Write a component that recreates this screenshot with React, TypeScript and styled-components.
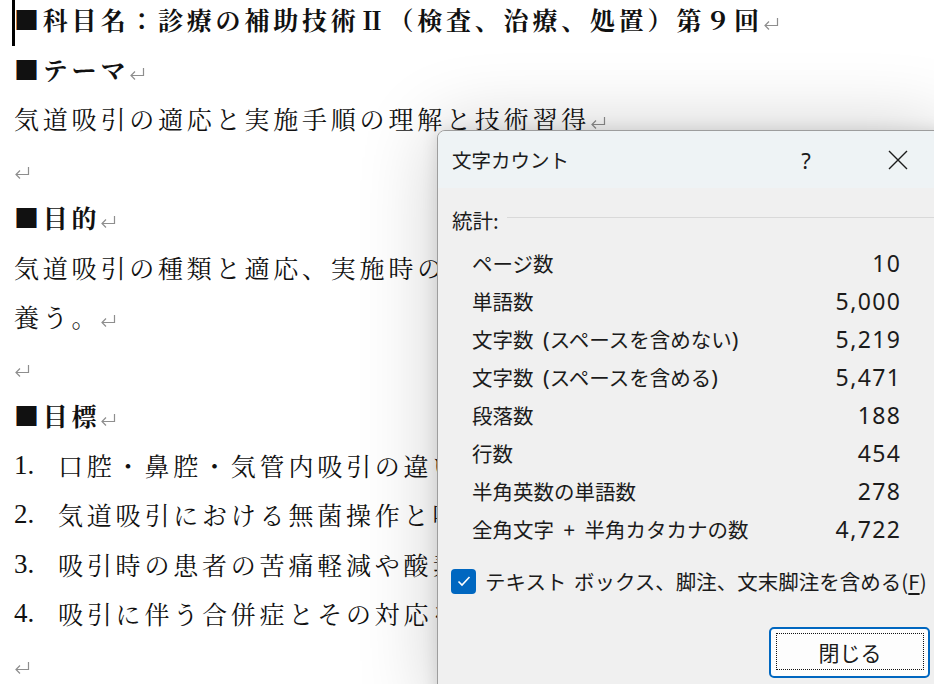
import React from "react";
import styled, { createGlobalStyle } from "styled-components";

const Global = createGlobalStyle`
    * { box-sizing: border-box; }
    html, body {
        margin: 0;
        background: #ffffff;
        overflow: hidden;
    }
`

const Page = styled.div`
    position: relative;
    width: 934px;
    height: 684px;
    overflow: hidden;
    background: #ffffff;
`

const Doc = styled.div`
    margin-top: -5px;
    padding-left: 14px;
    font-family: "Noto Serif CJK JP", "Noto Sans CJK JP", serif;
    color: #111;
`

const Line = styled.div<{ $bold?: boolean }>`
    position: relative;
    height: 49.5px;
    line-height: 49.5px;
    font-size: 25px;
    letter-spacing: 3.8px;
    white-space: nowrap;
    font-weight: ${({ $bold }) => ($bold ? 700 : 400)};
`

const Caret = styled.span`
    position: absolute;
    left: -2px;
    top: 4.75px;
    width: 3px;
    height: 46px;
    background: #000;
`

// paragraph mark shown by Word's formatting view
const MarkSvg = styled.svg`
    display: inline-block;
    width: 16px;
    height: 14px;
    vertical-align: -1px;
`

const Mark = () => (
    <MarkSvg viewBox="0 0 16 14">
        <path d="M14.5 1 V8.5 H2 M6 4.5 L2 8.5 L6 12.5" stroke="#8e8e8e" strokeWidth="1.2" fill="none" />
    </MarkSvg>
)

const ListItem = styled(Line)`
    display: grid;
    grid-template-columns: 44px auto;
`

const Num = styled.span`
    font-family: "Liberation Serif", serif;
    font-size: 27px;
    letter-spacing: 0;
`

const Dialog = styled.div`
    position: absolute;
    left: 437px;
    top: 130px;
    width: 510px;
    height: 580px;
    border: 1px solid #9d9d9d;
    border-radius: 8px 8px 0 0;
    background: #f0f0f0;
    box-shadow: 0 0 80px rgba(0, 0, 0, 0.2), 0 0 16px rgba(0, 0, 0, 0.12);
    font-family: "Noto Sans CJK JP", "Noto Sans", sans-serif;
    color: #1b1b1b;
    overflow: hidden;
    display: flex;
    flex-direction: column;
`

const TitleBar = styled.div`
    height: 57px;
    flex: none;
    display: flex;
    align-items: center;
    padding: 0 25px 0 14px;
    background: #eef3f5;
`

const Title = styled.div`
    flex: 1;
    font-size: 19.5px;
`

const TitleButton = styled.div<{ $gap?: string }>`
    width: 46px;
    height: 40px;
    display: flex;
    align-items: center;
    justify-content: center;
    margin-left: ${({ $gap }) => $gap ?? '0'};
    font-family: "Noto Sans", sans-serif;
    font-size: 22px;
`

const Body = styled.div`
    padding-left: 14px;
`

const SectionHead = styled.div`
    margin-top: 17px;
    height: 30px;
    display: flex;
    align-items: center;
    font-size: 20.5px;
`

const Rule = styled.div`
    flex: 1;
    height: 1px;
    margin: 0 0 6px 8px;
    background: #d9d9d9;
`

const Stats = styled.div`
    margin-top: 9px;
    padding: 0 46px 0 20px;
    display: grid;
    grid-template-columns: 1fr auto;
    grid-auto-rows: 38px;
    align-items: center;
`

const Label = styled.div`
    font-size: 20.5px;
    word-spacing: 5px;
    white-space: nowrap;
`

const Paren = styled.span`
    font-family: "Noto Sans", sans-serif;
    font-size: 22px;
`

const Value = styled.div`
    font-family: "Noto Sans", sans-serif;
    font-size: 23px;
    letter-spacing: 1.4px;
    margin-right: -1.4px;
    text-align: right;
`

const CheckRow = styled.label`
    margin-top: 18px;
    height: 30px;
    display: flex;
    align-items: center;
    gap: 9px;
    font-size: 20.5px;
    word-spacing: 3px;
    white-space: nowrap;
`

const Box = styled.span`
    width: 25px;
    height: 25px;
    margin-left: -1px;
    border-radius: 4px;
    background: #0067c0;
    display: flex;
    align-items: center;
    justify-content: center;
`

const Key = styled.span`
    text-decoration: underline;
    text-underline-offset: 3px;
`

const ButtonRow = styled.div`
    margin-top: 31px;
    padding-right: 16px;
    display: flex;
    justify-content: flex-end;
`

const Button = styled.div`
    width: 161px;
    height: 51px;
    border: 2px solid #0067c0;
    border-radius: 5px;
    background: #fdfdfd;
    padding: 4px 4px 6px 5px;
`

const Focus = styled.div`
    height: 100%;
    border: 1px dotted #111;
    display: flex;
    align-items: center;
    justify-content: center;
    font-size: 21px;
`

const stats: [React.ReactNode, string][] = [
    ["ページ数", "10"],
    ["単語数", "5,000"],
    [<>文字数 <Paren>(</Paren>スペースを含めない<Paren>)</Paren></>, "5,219"],
    [<>文字数 <Paren>(</Paren>スペースを含める<Paren>)</Paren></>, "5,471"],
    ["段落数", "188"],
    ["行数", "454"],
    ["半角英数の単語数", "278"],
    ["全角文字 + 半角カタカナの数", "4,722"],
]

const goals = [
    "口腔・鼻腔・気管内吸引の違いを説明できる。",
    "気道吸引における無菌操作と吸引圧の管理を理解する。",
    "吸引時の患者の苦痛軽減や酸素化の確認を実施できる。",
    "吸引に伴う合併症とその対応を説明できる。",
]

const App = () => {
    return (
        <Page>
            <Global />
            <Doc>
                <Line $bold>
                    <Caret />
                    ■科目名：診療の補助技術Ⅱ（検査、治療、処置）第９回<Mark />
                </Line>
                <Line $bold>■テーマ<Mark /></Line>
                <Line>気道吸引の適応と実施手順の理解と技術習得<Mark /></Line>
                <Line><Mark /></Line>
                <Line $bold>■目的<Mark /></Line>
                <Line>気道吸引の種類と適応、実施時の注意点を理解し、安全に実施する能力を</Line>
                <Line>養う。<Mark /></Line>
                <Line><Mark /></Line>
                <Line $bold>■目標<Mark /></Line>
                {goals.map((g, i) => (
                    <ListItem key={i}>
                        <Num>{i + 1}.</Num>
                        <span>{g}<Mark /></span>
                    </ListItem>
                ))}
                <Line><Mark /></Line>
            </Doc>

            <Dialog>
                <TitleBar>
                    <Title>文字カウント</Title>
                    <TitleButton>?</TitleButton>
                    <TitleButton $gap="46px">
                        <svg width="20" height="20" viewBox="0 0 20 20">
                            <path d="M1 1 L19 19 M19 1 L1 19" stroke="#1b1b1b" strokeWidth="1.4" fill="none" />
                        </svg>
                    </TitleButton>
                </TitleBar>
                <Body>
                    <SectionHead>
                        統計:
                        <Rule />
                    </SectionHead>
                    <Stats>
                        {stats.map(([label, value]) => (
                            <React.Fragment key={value}>
                                <Label>{label}</Label>
                                <Value>{value}</Value>
                            </React.Fragment>
                        ))}
                    </Stats>
                    <CheckRow>
                        <Box>
                            <svg width="14" height="12" viewBox="0 0 14 12">
                                <path d="M1.5 6.5 L5 10 L12.5 2" stroke="#ffffff" strokeWidth="1.6" fill="none" />
                            </svg>
                        </Box>
                        <span>テキスト ボックス、脚注、文末脚注を含める(<Key>F</Key>)</span>
                    </CheckRow>
                    <ButtonRow>
                        <Button>
                            <Focus>閉じる</Focus>
                        </Button>
                    </ButtonRow>
                </Body>
            </Dialog>
        </Page>
    )
}

export default App;
